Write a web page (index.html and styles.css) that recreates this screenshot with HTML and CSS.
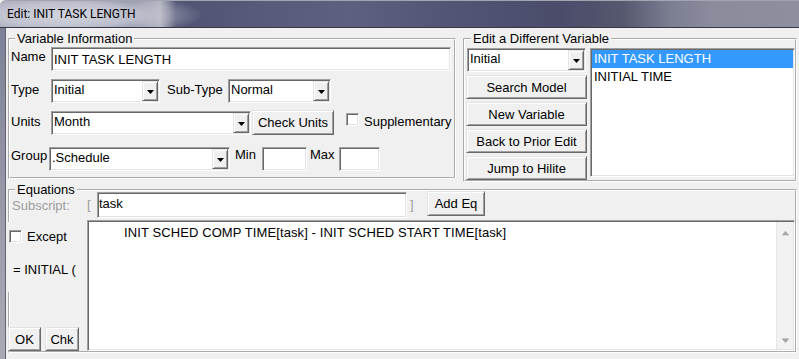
FILE: index.html
```html
<!DOCTYPE html>
<html>
<head>
<meta charset="utf-8">
<title>Edit: INIT TASK LENGTH</title>
<link rel="stylesheet" href="styles.css">
</head>
<body>
<div class="window">
  <div class="titlebar"><span class="title">Edit: INIT TASK LENGTH</span></div>
  <div class="frame">
    <div class="frame-edge"></div>
    <div class="client">
      <div class="top">
        <fieldset class="group varinfo">
          <legend>Variable Information</legend>
          <div class="row row-name">
            <span class="lbl lbl-name">Name</span>
            <div class="field name-field">INIT TASK LENGTH</div>
          </div>
          <div class="row row-type">
            <span class="lbl lbl-type">Type</span>
            <div class="combo combo-type"><span class="combo-text">Initial</span><span class="drop"><svg width="7" height="4" viewBox="0 0 7 4"><polygon points="0,0 7,0 3.5,4" fill="#000"/></svg></span></div>
            <span class="lbl lbl-sub">Sub-Type</span>
            <div class="combo combo-sub"><span class="combo-text">Normal</span><span class="drop"><svg width="7" height="4" viewBox="0 0 7 4"><polygon points="0,0 7,0 3.5,4" fill="#000"/></svg></span></div>
          </div>
          <div class="row row-units">
            <span class="lbl lbl-units">Units</span>
            <div class="combo combo-units"><span class="combo-text">Month</span><span class="drop"><svg width="7" height="4" viewBox="0 0 7 4"><polygon points="0,0 7,0 3.5,4" fill="#000"/></svg></span></div>
            <div class="btn btn-check">Check Units</div>
            <span class="check check-supp"></span>
            <span class="lbl lbl-supp">Supplementary</span>
          </div>
          <div class="row row-group">
            <span class="lbl lbl-group">Group</span>
            <div class="combo combo-group"><span class="combo-text">.Schedule</span><span class="drop"><svg width="7" height="4" viewBox="0 0 7 4"><polygon points="0,0 7,0 3.5,4" fill="#000"/></svg></span></div>
            <span class="lbl lbl-min">Min</span>
            <div class="field field-min"></div>
            <span class="lbl lbl-max">Max</span>
            <div class="field field-max"></div>
          </div>
        </fieldset>
        <fieldset class="group editvar">
          <legend>Edit a Different Variable</legend>
          <div class="edit-body">
            <div class="edit-col">
              <div class="combo combo-edit"><span class="combo-text">Initial</span><span class="drop"><svg width="7" height="4" viewBox="0 0 7 4"><polygon points="0,0 7,0 3.5,4" fill="#000"/></svg></span></div>
              <div class="btn btn-col">Search Model</div>
              <div class="btn btn-col">New Variable</div>
              <div class="btn btn-col">Back to Prior Edit</div>
              <div class="btn btn-col">Jump to Hilite</div>
            </div>
            <div class="listbox">
              <div class="item selected">INIT TASK LENGTH</div>
              <div class="item">INITIAL TIME</div>
            </div>
          </div>
        </fieldset>
      </div>
      <fieldset class="group equations">
        <legend>Equations</legend>
        <div class="sub-row">
          <span class="sub-label">Subscript:</span>
          <span class="bracket bracket-open">[</span>
          <div class="field sub-field">task</div>
          <span class="bracket bracket-close">]</span>
          <div class="btn btn-addeq">Add Eq</div>
        </div>
        <div class="eq-body">
          <div class="eq-side">
            <div class="except"><span class="check check-except"></span><span class="except-text">Except</span></div>
            <div class="initial">= INITIAL (</div>
            <div class="side-spacer"></div>
            <div class="side-btns"><div class="btn btn-ok">OK</div><div class="btn btn-chk">Chk</div></div>
          </div>
          <div class="eq-area">
            <div class="eq-text">INIT SCHED COMP TIME[task] - INIT SCHED START TIME[task]</div>
            <div class="vscroll">
              <span class="sarrow"><svg width="9" height="6" viewBox="0 0 9 6"><polygon points="4.5,1 8,5 1,5" fill="#a6a6a6"/><line x1="1" y1="5.5" x2="8" y2="5.5" stroke="#d8d8d8" stroke-width="1"/></svg></span>
              <span class="sarrow"><svg width="9" height="6" viewBox="0 0 9 6"><line x1="1" y1="0.5" x2="8" y2="0.5" stroke="#c4c4c4" stroke-width="1"/><polygon points="1,1 8,1 4.5,5" fill="#a6a6a6"/></svg></span>
            </div>
          </div>
        </div>
      </fieldset>
    </div>
  </div>
</div>
</body>
</html>
```

FILE: styles.css
```css
* { box-sizing: border-box; }
html, body { margin: 0; padding: 0; }
body {
  width: 799px;
  height: 359px;
  overflow: hidden;
  background: #f0f0f0;
  font-family: "Liberation Sans", Arial, sans-serif;
  font-size: 13px;
  line-height: 15px;
  color: #000;
}
.window { display: flex; flex-direction: column; height: 359px; }

.titlebar {
  flex: none;
  height: 28px;
  display: flex;
  align-items: center;
  padding-left: 7px;
  border-top: 1px solid #a2a4b2;
  border-bottom: 1px solid #363846;
  border-top-left-radius: 6px;
  background:
    radial-gradient(ellipse 135px 24px at 68px 14px, rgba(214,216,226,0.96) 0%, rgba(200,202,214,0.85) 50%, rgba(170,172,190,0) 100%),
    linear-gradient(90deg, #9a9cae 0%, #70728e 16%, #50537266 20%, #505372 22%, #575a7b 32%, #5e6080 44%, #535576 56%, #4a4c6a 70%, #56586f 78%, #7c7e92 84%, #8a8b9c 89%, #8e8f9e 100%);
  font-family: Roboto, "Liberation Sans", sans-serif;
  font-size: 12px;
  color: #000;
}

.frame { flex: 1; display: flex; min-height: 0; }
.frame-edge {
  width: 6px;
  flex: none;
  background: linear-gradient(180deg, #7e8096, #9a9cab 60%, #a8aab4);
  border-right: 1px solid #62646f;
}
.client { flex: 1; padding: 3px 0 0 2px; display: flex; flex-direction: column; }

/* group boxes */
.group { margin: 0; padding: 0; border: 2px groove #fff; min-width: 0; }
.group > legend { margin-left: 5px; padding: 0 2px; line-height: 15px; font-size: 13px; }

.top { display: flex; align-items: flex-start; gap: 7px; }
.varinfo { width: 448px; padding: 0 0 6px 0; }
.editvar { width: 334px; padding: 2px 0 0 1px; }

/* common controls */
.field, .combo, .listbox, .eq-area, .check {
  background: #fff;
  border: 1px solid;
  border-color: #a0a0a0 #fff #fff #a0a0a0;
  box-shadow: inset 1px 1px #696969, inset -1px -1px #e3e3e3;
}
.field { height: 24px; padding: 4px 2px 0 2px; white-space: nowrap; }
.combo { display: flex; height: 24px; padding: 1px; flex: none; }
.combo-text { flex: 1; padding: 1px 0 0 1px; white-space: nowrap; overflow: hidden; }
.drop {
  width: 16px;
  flex: none;
  background: #f0f0f0;
  border: 1px solid;
  border-color: #e3e3e3 #696969 #696969 #e3e3e3;
  box-shadow: inset 1px 1px #fff, inset -1px -1px #a0a0a0;
  display: flex;
  align-items: center;
  justify-content: center;
}
.drop svg { display: block; margin-top: 1px; }
.btn {
  display: flex;
  align-items: center;
  justify-content: center;
  height: 24px;
  flex: none;
  background: #f0f0f0;
  border: 1px solid;
  border-color: #e3e3e3 #696969 #696969 #e3e3e3;
  box-shadow: inset 1px 1px #fff, inset -1px -1px #a0a0a0;
  white-space: nowrap;
}
.check { width: 13px; height: 13px; flex: none; display: block; }

/* variable information rows */
.row { display: flex; align-items: flex-start; height: 24px; }
.lbl { flex: none; white-space: nowrap; }
.row-name { margin-top: 1px; }
.row-type { margin-top: 8px; }
.row-units { margin-top: 8px; }
.row-group { margin-top: 12px; }

.lbl-name { width: 41px; padding: 2px 0 0 1px; }
.name-field { width: 400px; }

.lbl-type { width: 41px; padding: 3px 0 0 1px; }
.combo-type { width: 109px; }
.lbl-sub { width: 68px; padding: 3px 0 0 7px; }
.combo-sub { width: 103px; }

.lbl-units { width: 41px; padding: 3px 0 0 1px; }
.combo-units { width: 200px; }
.btn-check { width: 82px; height: 25px; margin: -1px 0 0 1px; }
.check-supp { margin: 2px 0 0 12px; }
.lbl-supp { margin-left: 5px; padding-top: 3px; }

.lbl-group { width: 39px; padding: 1px 0 0 1px; }
.combo-group { width: 181px; }
.lbl-min { width: 32px; padding: 0 0 0 5px; }
.field-min { width: 45px; }
.lbl-max { width: 32px; padding: 0 0 0 3px; }
.field-max { width: 41px; }

/* edit a different variable */
.edit-body { display: flex; align-items: flex-start; gap: 3px; }
.edit-col { width: 121px; flex: none; display: flex; flex-direction: column; gap: 3px; }
.combo-edit { width: 119px; margin-left: 1px; }
.listbox { width: 205px; height: 129px; padding: 1px; flex: none; }
.item { height: 18px; line-height: 18px; padding-left: 2px; white-space: nowrap; }
.item.selected { background: #3399ff; color: #fff; }

/* equations */
.equations { width: 789px; }
.sub-row { display: flex; align-items: flex-start; height: 26px; margin-top: -5px; }
.sub-label { width: 77px; flex: none; padding: 6px 0 0 2px; color: #9d9d9d; }
.bracket { flex: none; color: #9d9d9d; padding-top: 5px; }
.bracket-open { width: 10px; }
.bracket-close { width: 20px; padding-left: 3px; }
.sub-field { width: 310px; height: 26px; flex: none; padding: 3px 1px 0 1px; }
.btn-addeq { width: 58px; height: 25px; margin-top: -1px; }

.eq-body { display: flex; height: 131px; margin-top: 2px; }
.eq-side { width: 79px; flex: none; margin-left: -2px; display: flex; flex-direction: column; }
.except { display: flex; align-items: flex-start; height: 28px; margin-top: 2px; padding-top: 7px; background: #f0f0f0; }
.check-except { margin: 1px 0 0 1px; }
.except-text { margin-left: 5px; }
.initial { height: 42px; padding: 12px 0 0 5px; background: #f0f0f0; white-space: nowrap; }
.side-spacer { flex: 1; }
.side-btns { display: flex; gap: 4px; }
.btn-ok { width: 33px; }
.btn-chk { width: 34px; }

.eq-area { flex: 1; display: flex; padding: 1px; }
.eq-text { flex: 1; padding: 3px 0 0 35px; white-space: nowrap; letter-spacing: 0.1px; }
.vscroll {
  width: 17px;
  flex: none;
  background: #f2f2f2;
  border-left: 1px solid #e6e6e6;
  display: flex;
  flex-direction: column;
  justify-content: space-between;
  align-items: center;
  padding: 8px 0 5px;
}
.sarrow { display: block; }
.sarrow svg { display: block; }
```
